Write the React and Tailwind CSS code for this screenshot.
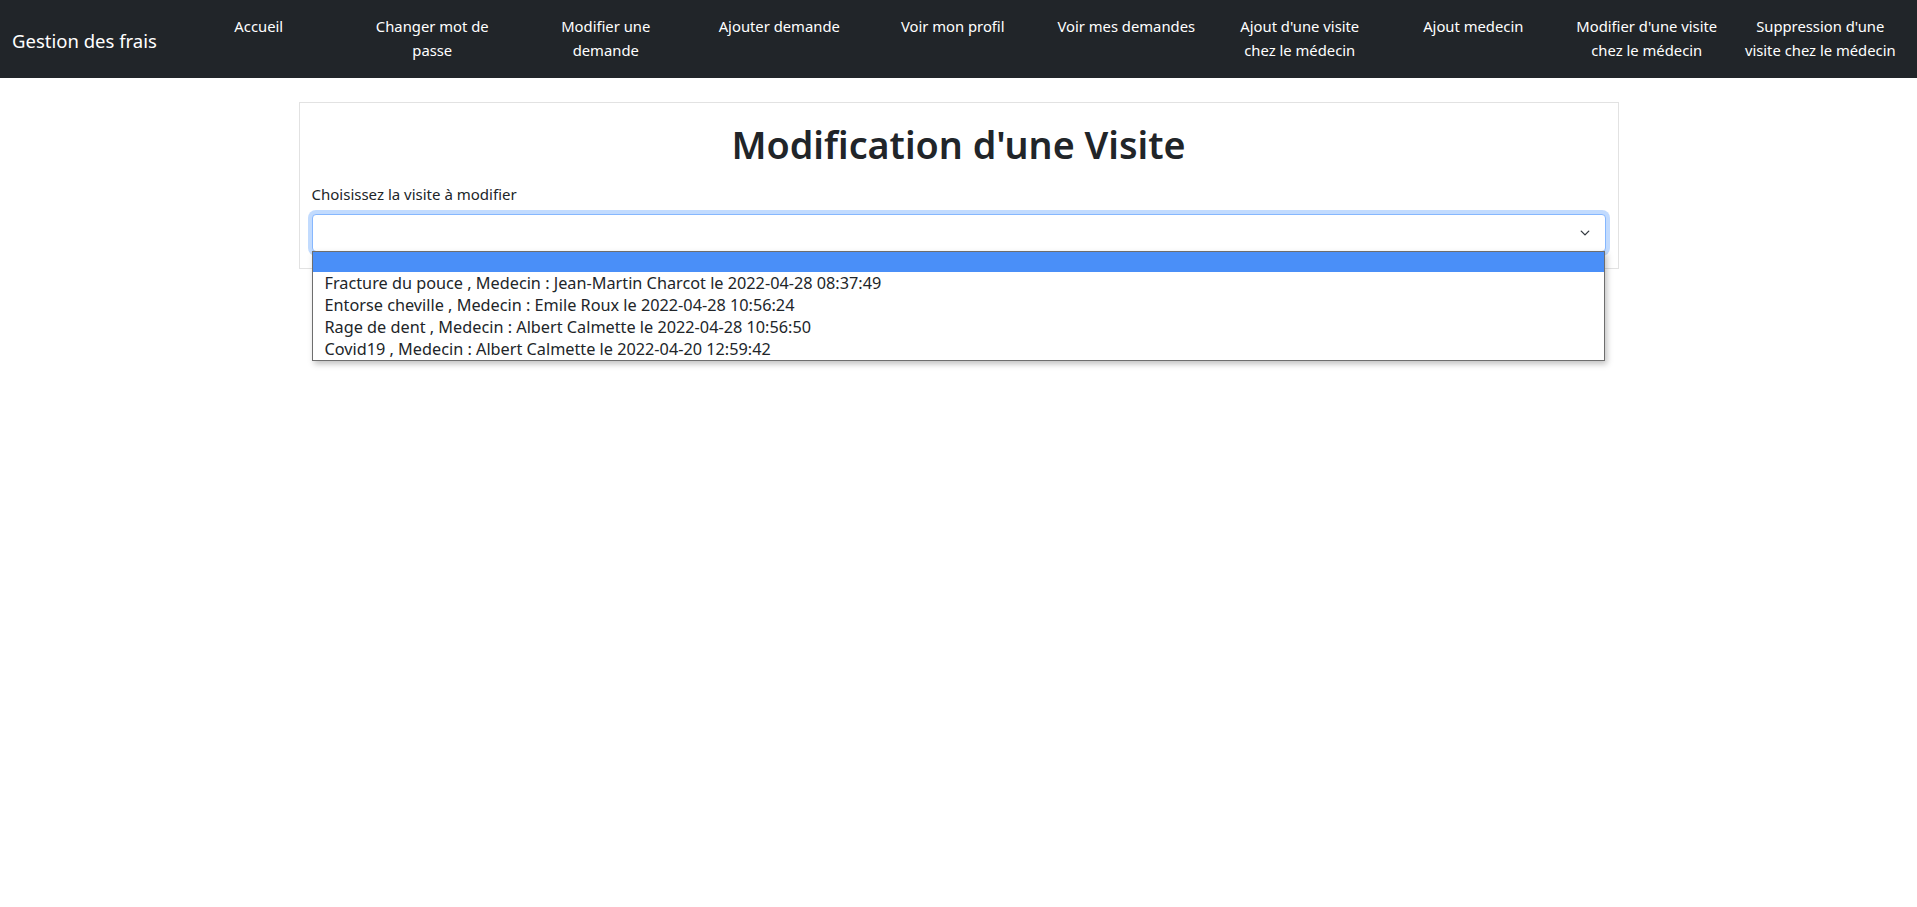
import React from 'react';

const navItems = [
  ['Accueil'],
  ['Changer mot de', 'passe'],
  ['Modifier une', 'demande'],
  ['Ajouter demande'],
  ['Voir mon profil'],
  ['Voir mes demandes'],
  ["Ajout d'une visite", 'chez le médecin'],
  ['Ajout medecin'],
  ["Modifier d'une visite", 'chez le médecin'],
  ["Suppression d'une", 'visite chez le médecin'],
];

const visites = [
  'Fracture du pouce , Medecin : Jean-Martin Charcot le 2022-04-28 08:37:49',
  'Entorse cheville , Medecin : Emile Roux le 2022-04-28 10:56:24',
  'Rage de dent , Medecin : Albert Calmette le 2022-04-28 10:56:50',
  'Covid19 , Medecin : Albert Calmette le 2022-04-20 12:59:42',
];

const Navbar = () => (
  <nav className="h-[78px] bg-[#212529] flex items-start pl-[12px] pr-[10px]">
    <div className="w-[160px] h-full flex items-center text-[18.5px] text-white leading-[30px] pt-[3px]">
      Gestion des frais
    </div>
    <ul className="flex-1 grid grid-cols-10 pt-[14px]">
      {navItems.map((lines, i) => (
        <li key={i} className="text-center text-[14.8px] leading-[24px] text-white whitespace-nowrap">
          {lines.map((l, j) => (
            <div key={j}>{l}</div>
          ))}
        </li>
      ))}
    </ul>
  </nav>
);

const App = () => {
  return (
    <div className="min-h-[907px] bg-white text-[#212529]" style={{ fontFamily: '"Noto Sans", sans-serif' }}>
      <Navbar />
      <main className="pt-[24px] flex justify-center">
        <div className="w-[1320px] border border-[#e2e2e2] px-[12px] pt-[18px] pb-[16px]">
          <h1 className="text-center text-[37.7px] font-semibold leading-[48px] mb-[13px]">
            Modification d'une Visite
          </h1>
          <label className="block text-[15px] leading-[24px] mb-[8px]">Choisissez la visite à modifier</label>
          <div className="relative">
            <div className="h-[38px] rounded-[4px] border border-[#86b7fe] bg-white shadow-[0_0_0_4px_rgba(13,110,253,0.25)] flex items-center justify-end pr-[13px]">
              <svg width="14" height="10" viewBox="0 0 16 16" fill="none" stroke="#343a40" strokeWidth="2.2" strokeLinecap="round" strokeLinejoin="round">
                <path d="M2 5l6 6 6-6" />
              </svg>
            </div>
            <div className="absolute left-0 right-[1px] top-[37px] border border-[#6e6e6e] bg-white shadow-[2px_3px_6px_rgba(0,0,0,0.25)] z-10">
              <div className="h-[20px] bg-[#4a8ff8]" />
              {visites.map((v) => (
                <div key={v} className="h-[22px] pl-[12px] text-[16.25px] leading-[22px] text-[#212529] whitespace-nowrap">
                  {v}
                </div>
              ))}
            </div>
          </div>
        </div>
      </main>
    </div>
  );
};

export default App;
